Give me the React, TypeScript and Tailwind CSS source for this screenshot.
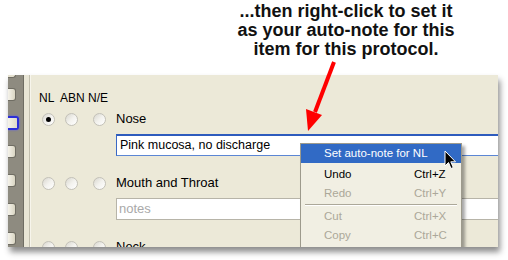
import React from "react";

const font = "font-['Liberation_Sans',Arial,sans-serif]";

const Radio = ({ checked = false }: { checked?: boolean }) => (
  <span className="w-[13px] h-[13px] rounded-full border border-[#c3c1b8] bg-linear-to-br from-[#d9d7cf] via-[#f3f2ee] to-white flex items-center justify-center">
    {checked && <span className="w-[5px] h-[5px] rounded-full bg-black" />}
  </span>
);

const RadioRow = ({ label, checked }: { label: string; checked?: boolean }) => (
  <div className="flex items-center h-[16px]">
    <div className="w-[18px] flex justify-center">
      <Radio checked={checked} />
    </div>
    <div className="w-[28px] flex justify-center">
      <Radio />
    </div>
    <div className="w-[28px] flex justify-center">
      <Radio />
    </div>
    <span className="ml-[3px] text-[13px] leading-[16px] text-black">{label}</span>
  </div>
);

const Tab = ({ selected = false }: { selected?: boolean }) =>
  selected ? (
    <div className="w-[11px] h-[14px] rounded-r-[3px] bg-linear-to-r from-[#f5f3ea] to-[#dedac9] border-2 border-l-0 border-[#2b2fd8] shadow-[0_0_2px_#5b5bff]" />
  ) : (
    <div className="w-[8px] h-[13px] rounded-r-[3px] bg-linear-to-r from-[#f5f3ea] to-[#d9d5c3] border border-l-0 border-[#6f6d63]" />
  );

type MenuItem = { label: string; shortcut?: string; disabled?: boolean };

const menuItems: MenuItem[] = [
  { label: "Undo", shortcut: "Ctrl+Z" },
  { label: "Redo", shortcut: "Ctrl+Y", disabled: true },
];

const menuItems2: MenuItem[] = [
  { label: "Cut", shortcut: "Ctrl+X", disabled: true },
  { label: "Copy", shortcut: "Ctrl+C", disabled: true },
];

const Row = ({ item }: { item: MenuItem }) => (
  <div
    className={`grid grid-cols-[90px_auto] pl-[23px] h-[19px] items-center text-[11.5px] ${
      item.disabled ? "text-[#aca899]" : "text-black"
    }`}
  >
    <span>{item.label}</span>
    <span>{item.shortcut}</span>
  </div>
);

const ContextMenu = () => (
  <div className="absolute left-[269px] top-[68px] w-[162px] h-[120px] bg-[#f1efe3] border border-[#9d9a8c] shadow-[3px_3px_3px_rgba(0,0,0,0.35)]">
    <div className="h-[19px] bg-[#316ac5] text-white text-[11.5px] flex items-center pl-[23px]">
      Set auto-note for NL
    </div>
    <div className="mt-[2px]">
      {menuItems.map((item) => (
        <Row key={item.label} item={item} />
      ))}
    </div>
    <div className="mx-[4px] my-[1px] border-t border-[#aca899] border-b border-b-white" />
    {menuItems2.map((item) => (
      <Row key={item.label} item={item} />
    ))}

    {/* mouse pointer */}
    <svg
      className="absolute left-[143px] top-[6px]"
      width="13"
      height="20"
      viewBox="0 0 13 20"
    >
      <path
        d="M1 1 L1 16 L4.5 12.5 L7 18.5 L9.3 17.5 L6.8 11.8 L11.5 11.8 Z"
        fill="#000"
        stroke="#fff"
        strokeWidth="1"
        strokeLinejoin="round"
      />
    </svg>
  </div>
);

const App = () => {
  return (
    <div className={`relative w-[508px] h-[260px] bg-white overflow-hidden ${font}`}>
      {/* callout text */}
      <div className="h-[75px] pt-[2px]">
        <p className="ml-[184px] w-[324px] text-center font-bold text-[18px] leading-[19px] text-[#111]">
          ...then right-click to set it
          <br />
          as your auto-note for this
          <br />
          item for this protocol.
        </p>
      </div>

      {/* panel */}
      <div className="ml-[8px] w-[490px] h-[172px] flex bg-[#ece9d8] overflow-hidden shadow-[2px_5px_6px_rgba(0,0,0,0.45)]">
        {/* tab strip */}
        <div className="w-[15px] bg-[#8e8b80] flex flex-col overflow-hidden">
          <div className="w-[8px] h-[3px] rounded-br-[3px] bg-[#e4e0cf] border border-l-0 border-t-0 border-[#6f6d63] mb-[10px]" />
          <div className="flex flex-col gap-[16px]">
            <Tab />
            <div className="-my-[1px]">
              <Tab selected />
            </div>
            <Tab />
            <Tab />
            <Tab />
            <Tab />
          </div>
        </div>
        <div className="w-[6px] bg-[#e9e6d6] border-l border-[#6f6d63]" />
        <div className="w-[2px] border-l border-[#c2bfaf] bg-[#f7f5ec]" />

        {/* content */}
        <div className="relative flex-1 overflow-hidden pt-[15px] pl-[8px]">
          <div className="flex h-[16px] text-[12px] leading-[16px] text-black">
            <span className="w-[18px]">NL</span>
            <span className="w-[28px] pl-[3px]">ABN</span>
            <span className="w-[28px] pl-[3px]">N/E</span>
          </div>

          <div className="mt-[5px]">
            <RadioRow label="Nose" checked />
            <div className="ml-[77px] mt-[7px] w-[420px] h-[22px] bg-white border border-[#5b86d4] border-t-2 border-t-[#2d5bbd] border-l-[#3a68c4] flex items-center pl-[3px] text-[12.5px] text-black">
              Pink mucosa, no discharge
            </div>
          </div>

          <div className="mt-[19px]">
            <RadioRow label="Mouth and Throat" />
            <div className="ml-[77px] mt-[7px] w-[420px] h-[22px] bg-white border border-[#b7b4a8] flex items-center pl-[2px] text-[13px] text-[#a9a9a9]">
              notes
            </div>
          </div>

          <div className="mt-[19px]">
            <RadioRow label="Neck" />
          </div>

          <ContextMenu />
        </div>
      </div>

      {/* red arrow */}
      <svg className="absolute left-0 top-0" width="508" height="260" viewBox="0 0 508 260">
        <line x1="334" y1="62" x2="315" y2="112" stroke="#ff0000" strokeWidth="4" />
        <polygon points="306,109 322,115 308,131" fill="#ff0000" />
      </svg>
    </div>
  );
};

export default App;
